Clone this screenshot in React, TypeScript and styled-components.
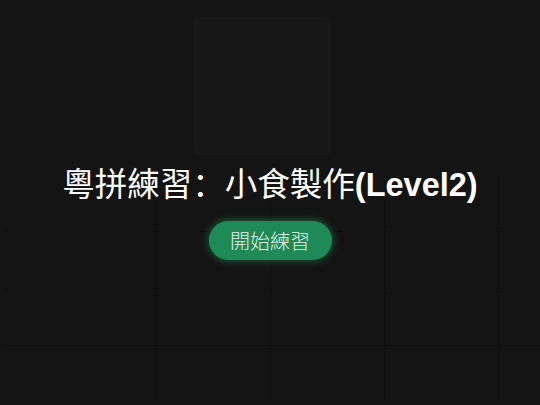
import styled, { createGlobalStyle } from "styled-components";

const line = "#0f0f0f";

const GlobalStyle = createGlobalStyle`
  html, body {
    margin: 0;
    padding: 0;
    background: #141414;
  }
  body {
    min-height: 405px;
    font-family: "Liberation Sans", "Noto Sans CJK SC", sans-serif;
    background-color: #141414;
    background-image:
      linear-gradient(${line}, ${line}),
      linear-gradient(${line}, ${line}),
      linear-gradient(${line}, ${line}),
      linear-gradient(${line}, ${line}),
      linear-gradient(${line}, ${line}),
      linear-gradient(${line}, ${line}),
      linear-gradient(${line}, ${line});
    background-repeat: no-repeat;
    background-size:
      1px 227px, 1px 227px, 1px 227px, 1px 227px,
      537px 1px, 537px 1px, 537px 1px;
    background-position:
      156px 174px, 270px 174px, 384px 174px, 498px 174px,
      3px 231px, 3px 288px, 3px 345px;
  }
`;

const Page = styled.main`
  display: flex;
  flex-direction: column;
  align-items: center;
  padding-top: 17px;
  width: 540px;
  height: 405px;
  box-sizing: border-box;
`;

const Cover = styled.div`
  width: 138px;
  height: 138px;
  margin-right: 16px;
  border-radius: 5px;
  background: #181818;
`;

const Title = styled.h1`
  margin: 8px 0 0;
  font-family: "Noto Sans CJK SC", "Liberation Sans", sans-serif;
  font-size: 32.5px;
  font-weight: 400;
  line-height: 38px;
  color: #ffffff;
  white-space: nowrap;
`;

const Latin = styled.span`
  font-family: "Liberation Sans", Arial, sans-serif;
  font-weight: 700;
`;

const StartButton = styled.button`
  margin-top: 17px;
  width: 123px;
  height: 39px;
  border: none;
  border-radius: 20px;
  background: #1f8a57;
  color: #e2f2e8;
  font-family: "Noto Sans CJK SC", sans-serif;
  font-size: 20px;
  font-weight: 300;
  cursor: pointer;
  box-shadow: 0 0 9px rgba(50, 205, 130, 0.5);
`;

export default function App() {
  return (
    <>
      <GlobalStyle />
      <Page>
        <Cover />
        <Title>
          粵拼練習：小食製作<Latin>(Level2)</Latin>
        </Title>
        <StartButton>開始練習</StartButton>
      </Page>
    </>
  );
}
